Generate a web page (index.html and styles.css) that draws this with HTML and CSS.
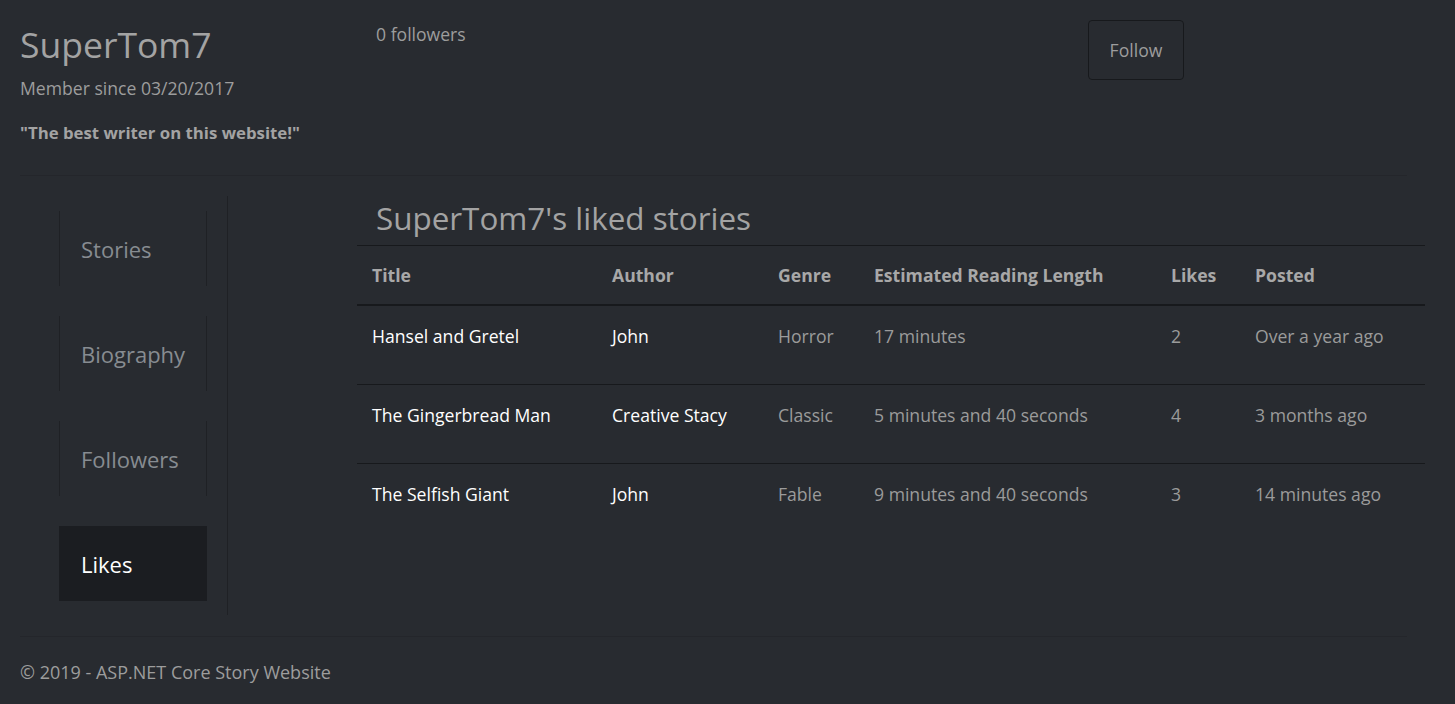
FILE: index.html
```html
<!DOCTYPE html>
<html lang="en">
<head>
<meta charset="utf-8">
<title>SuperTom7</title>
<link rel="stylesheet" href="styles.css">
</head>
<body>
<header class="profile">
  <div class="profile-info">
    <h1 class="profile-name">SuperTom7</h1>
    <p class="member-since">Member since 03/20/2017</p>
    <p class="quote">"The best writer on this website!"</p>
  </div>
  <div class="profile-followers">0 followers</div>
  <div class="profile-actions"><button class="btn-follow">Follow</button></div>
</header>
<hr class="divider">
<main class="main">
  <nav class="side-nav">
    <a class="nav-link" href="#">Stories</a>
    <a class="nav-link" href="#">Biography</a>
    <a class="nav-link" href="#">Followers</a>
    <a class="nav-link active" href="#">Likes</a>
  </nav>
  <section class="content">
    <h2 class="content-title">SuperTom7's liked stories</h2>
    <table class="stories">
      <thead>
        <tr>
          <th class="c-title">Title</th>
          <th class="c-author">Author</th>
          <th class="c-genre">Genre</th>
          <th class="c-length">Estimated Reading Length</th>
          <th class="c-likes">Likes</th>
          <th class="c-posted">Posted</th>
        </tr>
      </thead>
      <tbody>
        <tr>
          <td class="hl">Hansel and Gretel</td>
          <td class="hl">John</td>
          <td>Horror</td>
          <td>17 minutes</td>
          <td>2</td>
          <td>Over a year ago</td>
        </tr>
        <tr>
          <td class="hl">The Gingerbread Man</td>
          <td class="hl">Creative Stacy</td>
          <td>Classic</td>
          <td>5 minutes and 40 seconds</td>
          <td>4</td>
          <td>3 months ago</td>
        </tr>
        <tr>
          <td class="hl">The Selfish Giant</td>
          <td class="hl">John</td>
          <td>Fable</td>
          <td>9 minutes and 40 seconds</td>
          <td>3</td>
          <td>14 minutes ago</td>
        </tr>
      </tbody>
    </table>
  </section>
</main>
<footer class="footer">
  <hr class="divider footer-line">
  <p class="footer-text">&copy; 2019 - ASP.NET Core Story Website</p>
</footer>
</body>
</html>
```

FILE: styles.css
```css
html, body {
  margin: 0;
  padding: 0;
}
body {
  background: #282b30;
  color: #9d9d9d;
  font-family: "Open Sans", "Noto Sans", "Liberation Sans", sans-serif;
  font-size: 17.6px;
  line-height: 24px;
  height: 704px;
  overflow: hidden;
}

.profile {
  display: flex;
  padding: 20px 20px 0 20px;
  height: 175px;
  box-sizing: border-box;
}
.profile-info {
  width: 356px;
}
.profile-name {
  margin: 0 0 8px 0;
  font-size: 35.5px;
  line-height: 48px;
  font-weight: 500;
  color: #a3a3a3;
}
.member-since {
  margin: 0 0 21px 0;
  color: #9d9d9d;
}
.quote {
  margin: 0;
  font-weight: 700;
  font-size: 16.8px;
  color: #a3a3a3;
}
.profile-followers {
  width: 712px;
  padding-top: 2px;
  color: #9d9d9d;
}
.btn-follow {
  font-family: inherit;
  font-size: 17.6px;
  line-height: 24px;
  color: #9d9d9d;
  background: transparent;
  border: 1px solid #17191c;
  border-radius: 4px;
  width: 96px;
  height: 60px;
  padding: 0;
  cursor: pointer;
}

.divider {
  margin: 0 48px 0 20px;
  border: 0;
  border-top: 1px solid #24262b;
  height: 0;
}

.main {
  display: flex;
  align-items: flex-start;
  padding-top: 20px;
  height: 422px;
}
.side-nav {
  width: 168px;
  margin-left: 20px;
  padding: 15px 0 14px 39px;
  border-right: 1px solid #1f2125;
  display: flex;
  flex-direction: column;
  gap: 30px;
}
.nav-link {
  display: flex;
  align-items: center;
  height: 75px;
  width: 148px;
  box-sizing: border-box;
  padding-left: 21px;
  border-left: 1px solid #1f2125;
  border-right: 1px solid #1f2125;
  color: #878c91;
  text-decoration: none;
  font-size: 22px;
}
.nav-link.active {
  background: #1b1d21;
  border-color: #1b1d21;
  color: #ffffff;
}

.content {
  margin-left: 129px;
  width: 1068px;
}
.content-title {
  margin: 0;
  padding: 2px 0 0 19px;
  height: 47px;
  font-size: 31.4px;
  line-height: 40px;
  font-weight: 500;
  color: #a3a3a3;
}
.stories {
  width: 100%;
  border-collapse: collapse;
  table-layout: fixed;
}
.stories th,
.stories td {
  text-align: left;
  padding: 0 0 0 15px;
  white-space: nowrap;
}
.stories th {
  height: 58px;
  font-weight: 700;
  color: #a8a8a8;
  border-top: 1px solid #17191c;
  border-bottom: 2px solid #17191c;
  vertical-align: middle;
}
.stories td {
  height: 60px;
  padding-top: 18px;
  vertical-align: top;
  color: #9b9b9b;
  border-top: 1px solid #17191c;
}
.stories tbody tr:first-child td {
  border-top: 0;
  height: 60px;
}
.stories td.hl {
  color: #ffffff;
}
.c-title { width: 225px; }
.c-author { width: 151px; }
.c-genre { width: 81px; }
.c-length { width: 282px; }
.c-likes { width: 69px; }

.footer {
  padding-top: 18px;
}
.footer-line {
  margin-right: 48px;
}
.footer-text {
  margin: 0;
  padding: 23px 0 0 20px;
  font-size: 18px;
  color: #9d9d9d;
}
```
